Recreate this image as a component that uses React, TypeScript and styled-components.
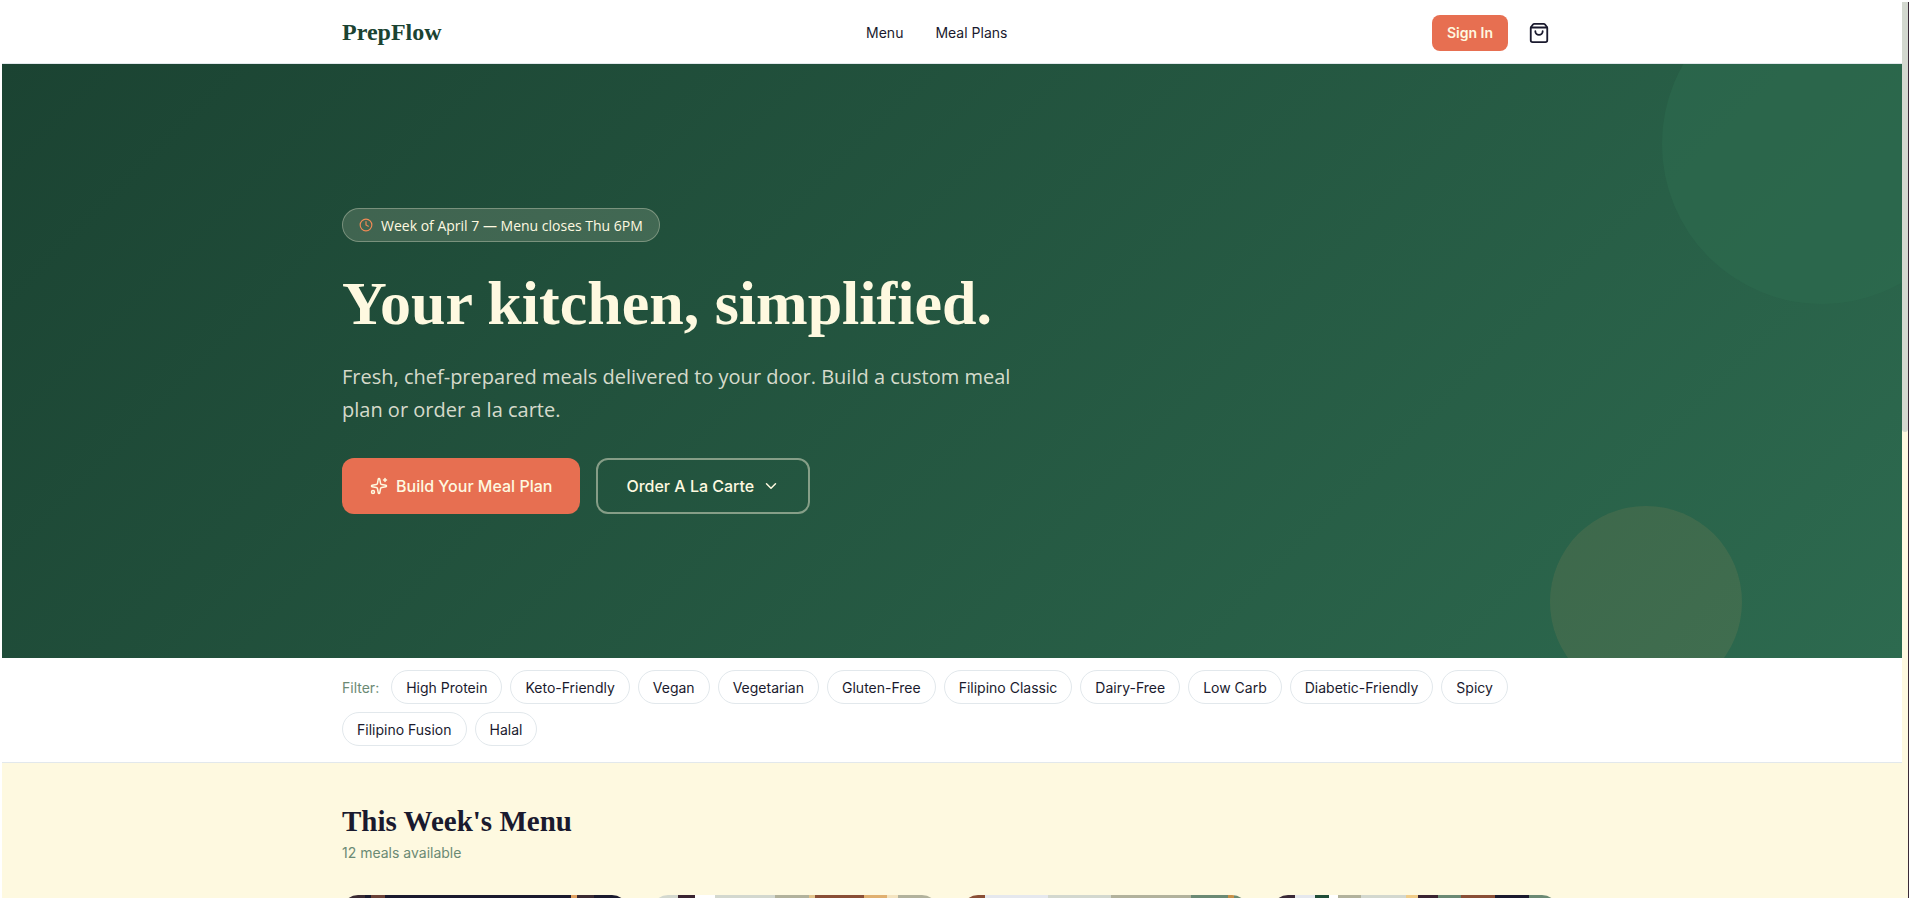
import React, { useState } from 'react';
import styled, { createGlobalStyle } from 'styled-components';
import { ChevronDown, Clock, ShoppingBag, Sparkles } from 'lucide-react';

const color = {
  forest: '#1b4332',
  green: '#2d6a4f',
  coral: '#e76f51',
  cream: '#fef9e0',
  ink: '#1a1a2e',
  muted: '#6b8a74',
  line: '#e2e8ec',
  thumb: '#d3d8cf',
};

const sans = "Inter, 'Liberation Sans', sans-serif";
const copy = "'Open Sans', 'Liberation Sans', sans-serif";
const serif = "'Liberation Serif', serif";

const GlobalStyle = createGlobalStyle`
  *, *::before, *::after { box-sizing: border-box; }
  body {
    margin: 0;
    background: #fff;
    color: ${color.ink};
    font-family: ${sans};
    font-size: 14px;
  }
  h1, h2, p { margin: 0; }
  a { color: inherit; text-decoration: none; }
  button { font-family: inherit; cursor: pointer; }
`;

const Viewport = styled.div`
  display: flex;
  height: 100vh;
  padding: 2px;
  overflow: hidden;
`;

const Page = styled.div`
  flex: 1;
  min-width: 0;
  overflow: hidden;
`;

const ScrollTrack = styled.div`
  flex: none;
  width: 7px;
  background: ${color.cream};
  border-right: 1px solid #3a2a38;
`;

const ScrollThumb = styled.div`
  height: 48%;
  background: ${color.thumb};
  border-radius: 0 0 3px 3px;
`;

const Container = styled.div`
  width: 100%;
  max-width: 1280px;
  margin: 0 auto;
  padding: 0 34px 0 30px;
`;

const Header = styled.header`
  background: #fff;
  border-bottom: 1px solid ${color.line};
`;

const HeaderRow = styled(Container)`
  display: flex;
  align-items: center;
  justify-content: space-between;
  height: 61px;
`;

const Logo = styled.a`
  && { color: ${color.forest}; }
  font-family: ${serif};
  font-size: 24px;
  font-weight: 700;
`;

const Nav = styled.nav`
  display: flex;
  gap: 32px;
`;

const HeaderActions = styled.div`
  display: flex;
  align-items: center;
  gap: 12px;
`;

const SignIn = styled.button`
  height: 36px;
  padding: 0 15px;
  border: 0;
  border-radius: 8px;
  background: ${color.coral};
  color: ${color.cream};
  font-size: 14px;
  font-weight: 600;
`;

const CartButton = styled.button`
  display: flex;
  padding: 8px;
  border: 0;
  background: none;
  color: ${color.ink};
`;

const Hero = styled.section`
  position: relative;
  display: flex;
  align-items: center;
  min-height: 66vh;
  overflow: hidden;
  background: linear-gradient(135deg, ${color.forest}, ${color.green});
`;

const Bubble = styled.div<{ $size: number; $tint: string }>`
  position: absolute;
  width: ${p => p.$size}px;
  height: ${p => p.$size}px;
  border-radius: 50%;
  background: ${p => p.$tint};
`;

const TopBubble = styled(Bubble)`
  top: -80px;
  right: -80px;
`;

const BottomBubble = styled(Bubble)`
  bottom: -40px;
  right: 160px;
`;

const HeroContent = styled(Container)`
  position: relative;
`;

const Badge = styled.div`
  display: inline-flex;
  align-items: center;
  gap: 8px;
  height: 34px;
  margin-bottom: 28px;
  padding: 0 16px;
  border: 1px solid rgba(254, 249, 224, 0.3);
  border-radius: 17px;
  background: rgba(254, 249, 224, 0.15);
  color: ${color.cream};
  font-family: ${copy};
  font-weight: 500;
  vertical-align: top;

  svg { color: #f08a55; }
`;

const HeroTitle = styled.h1`
  margin-bottom: 24px;
  color: ${color.cream};
  font-family: ${serif};
  font-size: 62px;
  font-weight: 700;
  line-height: 66px;
`;

const HeroText = styled.p`
  max-width: 672px;
  margin-bottom: 32px;
  color: rgba(255, 250, 236, 0.83);
  font-family: ${copy};
  font-size: 20px;
  line-height: 33px;
`;

const HeroActions = styled.div`
  display: flex;
  flex-wrap: wrap;
  gap: 16px;
`;

const HeroButton = styled.button<{ $outlined?: boolean }>`
  display: flex;
  align-items: center;
  gap: 8px;
  height: 56px;
  padding: 0 28px;
  border: ${p => (p.$outlined ? '2px solid rgba(254, 249, 224, 0.45)' : '0')};
  border-radius: 12px;
  background: ${p => (p.$outlined ? 'transparent' : color.coral)};
  color: ${color.cream};
  font-size: 16px;
  font-weight: 500;
`;

const FilterBar = styled.section`
  padding: 12px 0 16px;
  background: #fff;
  border-bottom: 1px solid ${color.line};
`;

const FilterRow = styled(Container)`
  display: flex;
  flex-wrap: wrap;
  align-items: center;
  gap: 8px;
`;

const FilterLabel = styled.span`
  margin-right: 4px;
  color: ${color.muted};
`;

const Chip = styled.button<{ $active: boolean }>`
  height: 34px;
  padding: 0 14px;
  border: 1px solid ${p => (p.$active ? color.green : color.line)};
  border-radius: 17px;
  background: ${p => (p.$active ? color.green : '#fff')};
  color: ${p => (p.$active ? color.cream : color.ink)};
  font-size: 14px;
`;

const MenuSection = styled.section`
  min-height: 100vh;
  padding: 40px 0;
  background: ${color.cream};
`;

const MenuTitle = styled.h2`
  font-family: ${serif};
  font-size: 29px;
  font-weight: 700;
  line-height: 36px;
`;

const MenuCount = styled.p`
  margin: 4px 0 32px;
  color: ${color.muted};
  line-height: 20px;
`;

const MealGrid = styled.div`
  display: grid;
  grid-template-columns: repeat(4, 1fr);
  gap: 24px;
`;

const MealPhoto = styled.div<{ $tones: string }>`
  height: 200px;
  border-radius: 16px;
  background: linear-gradient(90deg, ${p => p.$tones});
`;

const filters = [
  'High Protein', 'Keto-Friendly', 'Vegan', 'Vegetarian', 'Gluten-Free', 'Filipino Classic',
  'Dairy-Free', 'Low Carb', 'Diabetic-Friendly', 'Spicy', 'Filipino Fusion', 'Halal',
];

const photos = [
  '#3a2a32 0 8%, #1a1a2e 8% 10%, #6b4238 10% 15%, #1a1a2e 15% 80%, #e0a060 80% 82%, #3a2a32 82% 88%, #1a1a2e 88%',
  '#d3d8cf 0 9%, #3a2432 9% 15%, #fff 15% 22%, #d3d8cf 22% 43%, #b2b29c 43% 55%, #e2c48c 55% 57%, #8a4f36 57% 74%, #e0b070 74% 82%, #f4e4c0 82% 86%, #b2b29c 86%',
  '#8a4f36 0 8%, #e5e8ee 8% 30%, #d3d8cf 30% 52%, #b2b29c 52% 80%, #6b8a74 80% 93%, #c89048 93% 95%, #6b8a74 95%',
  '#3a2a38 0 8%, #e5e8ee 8% 15%, #1f4d38 15% 20%, #fff 20% 23%, #b2b29c 23% 31%, #d3d8cf 31% 47%, #f0cc88 47% 51%, #3a2432 51% 58%, #6b8a74 58% 66%, #8a4f36 66% 78%, #1a1a2e 78% 90%, #6b8a74 90%',
];

export default function App() {
  const [active, setActive] = useState<string[]>([]);
  const toggle = (name: string) =>
    setActive(list => (list.includes(name) ? list.filter(n => n !== name) : [...list, name]));

  return (
    <>
      <GlobalStyle />
      <Viewport>
        <Page>
          <Header>
            <HeaderRow>
              <Logo href="#">PrepFlow</Logo>
              <Nav>
                <a href="#menu">Menu</a>
                <a href="#plans">Meal Plans</a>
              </Nav>
              <HeaderActions>
                <SignIn>Sign In</SignIn>
                <CartButton aria-label="Cart">
                  <ShoppingBag size={22} />
                </CartButton>
              </HeaderActions>
            </HeaderRow>
          </Header>

          <Hero>
            <TopBubble $size={320} $tint="rgba(45, 106, 79, 0.6)" />
            <BottomBubble $size={192} $tint="rgba(244, 162, 97, 0.1)" />
            <HeroContent>
              <Badge>
                <Clock size={14} />
                Week of April 7 — Menu closes Thu 6PM
              </Badge>
              <HeroTitle>Your kitchen, simplified.</HeroTitle>
              <HeroText>
                Fresh, chef-prepared meals delivered to your door. Build a custom meal plan or order a la carte.
              </HeroText>
              <HeroActions>
                <HeroButton>
                  <Sparkles size={18} />
                  Build Your Meal Plan
                </HeroButton>
                <HeroButton $outlined>
                  Order A La Carte
                  <ChevronDown size={18} />
                </HeroButton>
              </HeroActions>
            </HeroContent>
          </Hero>

          <FilterBar>
            <FilterRow>
              <FilterLabel>Filter:</FilterLabel>
              {filters.map(name => (
                <Chip
                  key={name}
                  $active={active.includes(name)}
                  aria-pressed={active.includes(name)}
                  onClick={() => toggle(name)}
                >
                  {name}
                </Chip>
              ))}
            </FilterRow>
          </FilterBar>

          <MenuSection id="menu">
            <Container>
              <MenuTitle>This Week's Menu</MenuTitle>
              <MenuCount>12 meals available</MenuCount>
              <MealGrid>
                {photos.map(tones => (
                  <MealPhoto key={tones} $tones={tones} />
                ))}
              </MealGrid>
            </Container>
          </MenuSection>
        </Page>
        <ScrollTrack>
          <ScrollThumb />
        </ScrollTrack>
      </Viewport>
    </>
  );
}
